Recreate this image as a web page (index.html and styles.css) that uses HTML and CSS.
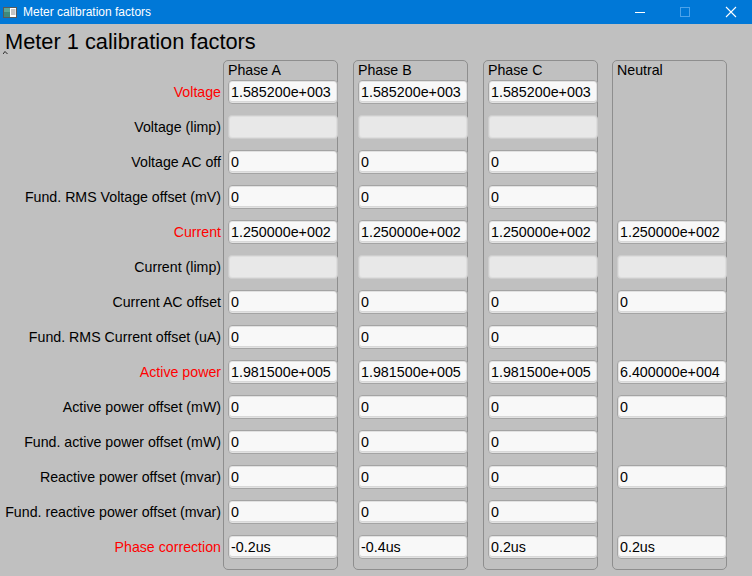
FILE: index.html
```html
<!DOCTYPE html>
<html>
<head>
<meta charset="utf-8">
<link rel="stylesheet" href="styles.css">
</head>
<body>
<div class="titlebar">
  <svg class="appicon" width="14" height="11" viewBox="0 0 14 11">
    <rect x="0.5" y="0.5" width="13" height="10" fill="#ffffff" stroke="#5a5a5a"/>
    <rect x="1" y="1" width="6" height="9" fill="#3f8a7c"/>
    <rect x="1" y="1" width="6" height="4" fill="#5aa596"/>
    <line x1="8" y1="3" x2="12.5" y2="3" stroke="#8a8a8a"/>
    <line x1="8" y1="5" x2="12.5" y2="5" stroke="#8a8a8a"/>
    <line x1="8" y1="7" x2="12.5" y2="7" stroke="#8a8a8a"/>
  </svg>
  <span class="wintitle">Meter calibration factors</span>
  <div class="controls">
    <svg class="ctl" width="46" height="24" viewBox="0 0 46 24"><line x1="21" y1="12.5" x2="31" y2="12.5" stroke="#ffffff"/></svg>
    <svg class="ctl" width="46" height="24" viewBox="0 0 46 24"><rect x="20.5" y="7.5" width="9" height="9" fill="none" stroke="#4da3ea"/></svg>
    <svg class="ctl" width="46" height="24" viewBox="0 0 46 24"><path d="M20 7 L30 17 M30 7 L20 17" stroke="#ffffff" stroke-width="1.1"/></svg>
  </div>
</div>
<div class="content">
  <h1 class="heading">Meter 1 calibration factors</h1>
  <svg class="caret" width="5" height="3" viewBox="0 0 5 3"><path d="M0 3 L2 0.5 L4.5 3" fill="none" stroke="#000" stroke-width="0.8"/></svg>
  <div class="grid">
    <div class="labels">
      <div class="lbl red">Voltage</div>
      <div class="lbl">Voltage (limp)</div>
      <div class="lbl">Voltage AC off</div>
      <div class="lbl">Fund. RMS Voltage offset (mV)</div>
      <div class="lbl red">Current</div>
      <div class="lbl">Current (limp)</div>
      <div class="lbl">Current AC offset</div>
      <div class="lbl">Fund. RMS Current offset (uA)</div>
      <div class="lbl red">Active power</div>
      <div class="lbl">Active power offset (mW)</div>
      <div class="lbl">Fund. active power offset (mW)</div>
      <div class="lbl">Reactive power offset (mvar)</div>
      <div class="lbl">Fund. reactive power offset (mvar)</div>
      <div class="lbl red">Phase correction</div>
    </div>

    <div class="group">
      <div class="ghead">Phase A</div>
      <div class="rows">
        <div class="field">1.585200e+003</div>
        <div class="field dis"></div>
        <div class="field">0</div>
        <div class="field">0</div>
        <div class="field">1.250000e+002</div>
        <div class="field dis"></div>
        <div class="field">0</div>
        <div class="field">0</div>
        <div class="field">1.981500e+005</div>
        <div class="field">0</div>
        <div class="field">0</div>
        <div class="field">0</div>
        <div class="field">0</div>
        <div class="field">-0.2us</div>
      </div>
    </div>

    <div class="group">
      <div class="ghead">Phase B</div>
      <div class="rows">
        <div class="field">1.585200e+003</div>
        <div class="field dis"></div>
        <div class="field">0</div>
        <div class="field">0</div>
        <div class="field">1.250000e+002</div>
        <div class="field dis"></div>
        <div class="field">0</div>
        <div class="field">0</div>
        <div class="field">1.981500e+005</div>
        <div class="field">0</div>
        <div class="field">0</div>
        <div class="field">0</div>
        <div class="field">0</div>
        <div class="field">-0.4us</div>
      </div>
    </div>

    <div class="group">
      <div class="ghead">Phase C</div>
      <div class="rows">
        <div class="field">1.585200e+003</div>
        <div class="field dis"></div>
        <div class="field">0</div>
        <div class="field">0</div>
        <div class="field">1.250000e+002</div>
        <div class="field dis"></div>
        <div class="field">0</div>
        <div class="field">0</div>
        <div class="field">1.981500e+005</div>
        <div class="field">0</div>
        <div class="field">0</div>
        <div class="field">0</div>
        <div class="field">0</div>
        <div class="field">0.2us</div>
      </div>
    </div>

    <div class="group neutral">
      <div class="ghead">Neutral</div>
      <div class="rows">
        <div class="empty"></div>
        <div class="empty"></div>
        <div class="empty"></div>
        <div class="empty"></div>
        <div class="field">1.250000e+002</div>
        <div class="field dis"></div>
        <div class="field">0</div>
        <div class="empty"></div>
        <div class="field">6.400000e+004</div>
        <div class="field">0</div>
        <div class="empty"></div>
        <div class="field">0</div>
        <div class="empty"></div>
        <div class="field">0.2us</div>
      </div>
    </div>
  </div>
</div>
</body>
</html>
```

FILE: styles.css
```css
html, body {
  margin: 0;
  padding: 0;
}
body {
  width: 752px;
  height: 576px;
  background: #c0c0c0;
  font-family: "Liberation Sans", Arial, sans-serif;
  overflow: hidden;
}
.titlebar {
  height: 24px;
  background: #0078d7;
  display: flex;
  align-items: center;
  position: relative;
}
.appicon {
  margin-left: 3px;
  margin-top: 1px;
  flex: none;
}
.wintitle {
  margin-left: 6px;
  color: #ffffff;
  font-family: "Liberation Sans", Arial, sans-serif;
  font-size: 12px;
  line-height: 24px;
}
.controls {
  margin-left: auto;
  display: flex;
}
.ctl {
  display: block;
  flex: none;
}
.content {
  position: relative;
  padding-top: 5px;
}
.heading {
  margin: 0;
  padding-left: 5px;
  font-weight: normal;
  font-size: 21.8px;
  line-height: 26px;
  color: #000;
}
.caret {
  position: absolute;
  left: 3px;
  top: 27px;
}
.grid {
  display: flex;
  align-items: flex-start;
  margin-top: 5px;
  gap: 15px;
}
.labels {
  width: 221px;
  margin-right: -13px;
  padding-top: 20px;
  display: flex;
  flex-direction: column;
  gap: 11px;
}
.lbl {
  height: 24px;
  line-height: 24px;
  text-align: right;
  font-size: 14.2px;
  color: #000;
  white-space: nowrap;
}
.lbl.red {
  color: #ff0000;
}
.group {
  width: 115px;
  box-sizing: border-box;
  border: 1px solid #8e8e8e;
  border-radius: 5px;
  padding: 0 0 10px 4px;
}
.group.neutral {
  margin-left: -1px;
}
.ghead {
  height: 19px;
  line-height: 19px;
  font-size: 14.2px;
  color: #000;
}
.rows {
  display: flex;
  flex-direction: column;
  gap: 11px;
  margin-right: -1px;
}
.field {
  height: 24px;
  box-sizing: border-box;
  border: 1px solid #a4a4a4;
  border-radius: 4px;
  background: #f8f8f8;
  box-shadow: inset 0 0 0 1px #e2e2e2, inset 0 -1px 0 1px #d8d8d8;
  font-size: 14.3px;
  line-height: 22px;
  padding-left: 2px;
  color: #000;
  white-space: nowrap;
  overflow: hidden;
}
.field.dis {
  background: #e8e8e8;
  border-color: #cdcdcd;
  box-shadow: inset 0 0 0 1px #dedede;
}
.empty {
  height: 24px;
}
```
